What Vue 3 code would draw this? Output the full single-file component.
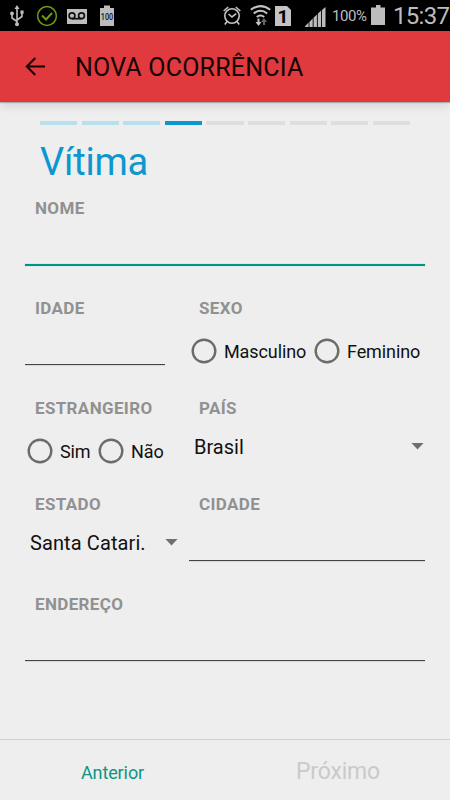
<script setup>
const steps = ['done', 'done', 'done', 'current', 'todo', 'todo', 'todo', 'todo', 'todo']
</script>

<template>
  <div class="screen">
    <div class="status">
      <svg class="usb" width="14" height="22" viewBox="0 0 14 22" fill="none" stroke="#bdbdbd" stroke-width="1.600">
        <path d="M7 3v15M7 16.500L2 13V9M7 15l5-3.500V7" />
        <path d="M7 0l2.500 4h-5zM10.400 5.500h3.200v3.200h-3.200z" fill="#bdbdbd" stroke="none" />
        <circle cx="2" cy="8.500" r="1.900" fill="#bdbdbd" stroke="none" />
        <circle cx="7" cy="19.200" r="2" fill="#bdbdbd" stroke="none" />
      </svg>
      <svg class="check" width="22" height="22" viewBox="0 0 22 22" fill="none" stroke="#6f9a10">
        <circle cx="11" cy="11" r="9.400" stroke-width="1.500" />
        <path d="M6 10.500l4 4L16 8" stroke-width="2" />
      </svg>
      <svg class="voice" width="20" height="15" viewBox="0 0 20 15">
        <path d="M0 0h20v15H0z" fill="#bdbdbd" />
        <g fill="none" stroke="#111" stroke-width="1.700">
          <circle cx="5" cy="6.800" r="2.900" /><circle cx="14.500" cy="6.800" r="2.900" /><path d="M5 9.700h9.500" />
        </g>
      </svg>
      <svg class="full" width="16" height="21" viewBox="-1 0 16 21">
        <path d="M0 3h4V.5h6V3h4v18H0z" fill="#bdbdbd" />
        <text x="7" y="15.200" text-anchor="middle" textLength="12.4" lengthAdjust="spacingAndGlyphs">100</text>
      </svg>
      <svg class="alarm" width="18" height="20" viewBox="0 0 18 20" fill="none" stroke="#c4c4c4" stroke-width="1.600">
        <circle cx="9" cy="10" r="7.200" />
        <path d="M.7 5l4.500-4M17.300 5l-4.500-4M4 15.500L1.800 18.500M14 15.500l2.200 3M5.500 8L9 11l4.200-3.300" />
      </svg>
      <svg class="wifi" width="21" height="22" viewBox="0 0 21 22" fill="none" stroke="#c4c4c4" stroke-width="2">
        <path d="M.8 4.800Q10.500-2.500 20.200 4.800M3.800 8.500Q10.500 3 17.200 8.500M6.800 12Q10.500 9 14.200 12" />
        <path d="M8.500 13.500v5" />
        <path d="M5.500 17h6l-3 4z" fill="#c4c4c4" stroke="none" />
        <path d="M14 20v-5" stroke="#666" /><path d="M11 17h6l-3-4z" fill="#666" stroke="none" />
      </svg>
      <div class="sim">1</div>
      <svg class="signal" width="21" height="20" viewBox="0 0 21 20" fill="#bdbdbd">
        <path d="M0 20v-.8l3.600-3.600V20zM4.400 20v-5.100l3.300-3.300V20zM8.600 20v-9.200l3.300-3.300V20zM12.800 20V6.800l3.300-3.300V20zM17 20V2.900L20.500 0v20z" />
      </svg>
      <span class="percent">100%</span>
      <svg class="battery" width="14" height="20" viewBox="0 0 14 20" fill="#bdbdbd">
        <path d="M0 2.500h5V0h4.500v2.500H14V20H0z" />
      </svg>
      <span class="clock">15:37</span>
    </div>

    <header class="bar">
      <svg class="back" width="20" height="19" viewBox="0 0 20 19" fill="none" stroke="#140405" stroke-width="2">
        <path d="M10.300 1L1.800 9.500l8.500 8.500M1.800 9.500H20" />
      </svg>
      <h1>NOVA OCORRÊNCIA</h1>
    </header>

    <main>
      <div class="steps">
        <i v-for="(s, i) in steps" :key="i" :class="s"></i>
      </div>
      <h2>Vítima</h2>

      <div class="form">
        <div class="row">
          <div class="field">
            <label>NOME</label>
            <div class="line focus"></div>
          </div>
        </div>

        <div class="row split">
          <div class="field">
            <label>IDADE</label>
            <div class="line"></div>
          </div>
          <div class="field">
            <label>SEXO</label>
            <div class="radios">
              <svg class="ring" viewBox="0 0 26 26"><circle cx="13" cy="13" r="11.300" /></svg><span class="male">Masculino</span>
              <svg class="ring" viewBox="0 0 26 26"><circle cx="13" cy="13" r="11.300" /></svg><span>Feminino</span>
            </div>
          </div>
        </div>

        <div class="row split short">
          <div class="field">
            <label>ESTRANGEIRO</label>
            <div class="radios">
              <svg class="ring" viewBox="0 0 26 26"><circle cx="13" cy="13" r="11.300" /></svg><span class="yes">Sim</span>
              <svg class="ring" viewBox="0 0 26 26"><circle cx="13" cy="13" r="11.300" /></svg><span>Não</span>
            </div>
          </div>
          <div class="field">
            <label>PAÍS</label>
            <div class="select"><span>Brasil</span><i class="caret"></i></div>
          </div>
        </div>

        <div class="row split">
          <div class="field">
            <label>ESTADO</label>
            <div class="select state"><span>Santa Catari.</span><i class="caret"></i></div>
          </div>
          <div class="field">
            <label>CIDADE</label>
            <div class="line"></div>
          </div>
        </div>

        <div class="row">
          <div class="field">
            <label>ENDEREÇO</label>
            <div class="line"></div>
          </div>
        </div>
      </div>
    </main>

    <footer>
      <div class="prev"><span>Anterior</span></div>
      <div class="next"><span>Próximo</span></div>
    </footer>
  </div>
</template>

<style>
body { background: #eee; overflow: hidden; }
</style>

<style scoped>
.screen {
  width: 450px;
  height: 800px;
  display: flex;
  flex-direction: column;
  background: #eee;
  font-family: Roboto, sans-serif;
  color: #111;
  overflow: hidden;
  white-space: nowrap;
}
i { display: block; flex: none; }
svg { display: block; flex: none; }
.status {
  height: 31px;
  flex: none;
  display: flex;
  align-items: flex-start;
  background: #000;
  color: #bdbdbd;
}
.usb { margin: 5px 0 0 10px; }
.check { margin: 5px 0 0 12px; }
.voice { margin: 9px 0 0 9px; }
.full { margin: 5px 0 0 12px; }
.full text { font-size: 8.5px; font-weight: 500; fill: #111; }
.alarm { margin: 6px 0 0 108px; }
.wifi { margin: 5px 0 0 9px; }
.sim {
  width: 16px;
  height: 20px;
  margin: 6px 0 0 4px;
  background: #c4c4c4;
  clip-path: polygon(0 0, 12px 0, 16px 4px, 16px 100%, 0 100%);
  color: #000;
  font-size: 19px;
  font-weight: 700;
  line-height: 21px;
  text-align: center;
}
.signal { margin: 7px 0 0 14px; }
.percent { font-size: 15px; line-height: 20px; margin: 6px 0 0 6px; width: 36px; letter-spacing: -0.4px; }
.battery { margin: 5px 0 0 3px; }
.clock { font-size: 24px; line-height: 28px; margin: 2px 0 0 8px; letter-spacing: -0.7px; }

.bar {
  height: 71px;
  flex: none;
  box-sizing: border-box;
  display: flex;
  align-items: center;
  padding-left: 25px;
  background: #e0393e;
  border-bottom: 1px solid #eb2f34;
  box-shadow: 0 1px 1px rgba(0, 0, 0, .22), 0 3px 10px rgba(0, 0, 0, .12);
}
h1 {
  margin: 3px 0 0 30px;
  font-size: 25px;
  line-height: 30px;
  font-weight: 400;
  letter-spacing: .2px;
  color: #140405;
}
main { flex: 1; padding: 19px 25px 0; }
.steps {
  display: grid;
  grid-template-columns: repeat(9, 1fr);
  gap: 4.6px;
  margin: 0 15px;
}
.steps i { height: 4px; background: #dedede; }
.steps .done { background: #b8dfec; }
.steps .current { background: #0c97cf; }
h2 {
  margin: 15px 0 0 15px;
  height: 58px;
  font-size: 38px;
  line-height: 44px;
  font-weight: 400;
  letter-spacing: -.2px;
  color: #0c97cf;
}
.row { height: 100px; display: grid; grid-template-columns: 1fr; }
.row.split { grid-template-columns: 140px 236px; column-gap: 24px; }
.row.short { height: 96px; }
.field { display: flex; flex-direction: column; min-width: 0; }
label {
  height: 20px;
  margin-left: 10px;
  font-size: 17px;
  line-height: 20px;
  font-weight: 700;
  letter-spacing: .35px;
  color: #919191;
}
.line {
  height: 1px;
  margin-top: 46px;
  background: #444;
  box-shadow: 0 1px 0 #d8d8d8;
}
.line.focus { height: 2px; background: #009582; box-shadow: 0 0 0 .5px #cfe0de; }
.radios {
  display: flex;
  align-items: center;
  height: 26px;
  margin: 20px 0 0 2px;
  font-size: 18px;
  line-height: 26px;
  letter-spacing: -.1px;
}
.ring { width: 26px; height: 26px; fill: none; stroke: #6b6b6b; stroke-width: 2.4; }
.radios span { margin: 2px 0 0 7px; }
.male { width: 90px; }
.yes { width: 38px; }
.select {
  display: flex;
  align-items: center;
  height: 30px;
  margin-top: 14px;
  padding-left: 5px;
  font-size: 20px;
  line-height: 30px;
}
.state { letter-spacing: .1px; }
.select .caret { margin: -2px 1px 0 auto; }
.state .caret { margin-right: -13px; }
.caret { width: 13px; height: 7px; background: #6f6f6f; clip-path: polygon(0 0, 100% 0, 50% 100%); }
footer {
  height: 61px;
  flex: none;
  box-sizing: border-box;
  border-top: 1px solid #cfcfcf;
  display: grid;
  grid-template-columns: 1fr 1fr;
  text-align: center;
}
.prev { padding-top: 8px; font-size: 18px; line-height: 50px; letter-spacing: -.1px; color: #0c9684; }
.next { padding: 7px 0 0 1px; font-size: 23px; line-height: 50px; letter-spacing: -.2px; color: #cacaca; }
</style>
